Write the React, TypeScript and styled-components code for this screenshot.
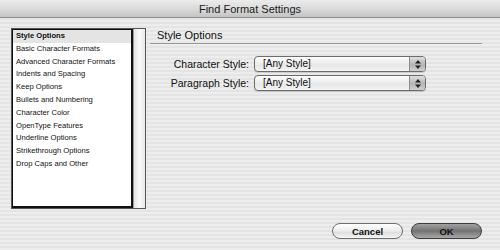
import styled, { createGlobalStyle } from 'styled-components';

const GlobalStyle = createGlobalStyle`
  html, body {
    margin: 0;
    padding: 0;
    width: 500px;
    height: 250px;
    overflow: hidden;
    background: #ececec;
  }
`;

const Dialog = styled.div`
  width: 500px;
  height: 250px;
  display: flex;
  flex-direction: column;
  font-family: 'Liberation Sans', Arial, sans-serif;
  color: #111;
  background: repeating-linear-gradient(
    to bottom,
    #ededed 0px,
    #ededed 2px,
    #e4e4e4 2px,
    #e4e4e4 4px
  );
`;

const TitleBar = styled.div`
  height: 17px;
  flex-shrink: 0;
  display: flex;
  align-items: center;
  justify-content: center;
  font-size: 11px;
  color: #1a1a1a;
  background: linear-gradient(to bottom, #ececec 0%, #d9d9d9 55%, #c4c4c4 100%);
  border-bottom: 1px solid #8f8f8f;
`;

const Body = styled.div`
  flex: 1;
  display: flex;
  padding: 10px 18px 0 11px;
  gap: 4px;
`;

const ListFrame = styled.div`
  width: 135px;
  height: 181px;
  display: flex;
  border: 1px solid #555;
  box-sizing: border-box;
  background: #fff;
`;

const List = styled.ul`
  flex: 1;
  margin: 0;
  padding: 0;
  list-style: none;
  border: 2px solid #111;
  border-top-width: 1px;
  border-left-width: 1px;
`;

const ListItem = styled.li<{ $selected?: boolean }>`
  height: 12.8px;
  line-height: 12.8px;
  padding-left: 3px;
  font-size: 7.6px;
  font-weight: ${({ $selected }) => ($selected ? 'bold' : 'normal')};
  background: ${({ $selected }) => ($selected ? '#e4e4e4' : 'transparent')};
  white-space: nowrap;
`;

const ScrollTrack = styled.div`
  width: 11px;
  background: linear-gradient(to right, #e4e4e4, #fafafa 50%, #e9e9e9);
  border-left: 1px solid #999;
`;

const Panel = styled.div`
  flex: 1;
  display: flex;
  flex-direction: column;
`;

const PanelHeading = styled.div`
  font-size: 11px;
  line-height: 13px;
  padding: 1px 0 1px 7px;
  border-bottom: 1px solid #9a9a9a;
`;

const Fields = styled.div`
  display: grid;
  grid-template-columns: 99px 172px;
  column-gap: 5px;
  row-gap: 3px;
  margin-top: 12px;
`;

const Label = styled.div`
  font-size: 10.5px;
  text-align: right;
  line-height: 16px;
`;

const Select = styled.div`
  height: 16px;
  display: flex;
  align-items: stretch;
  border: 1px solid #6c6c6c;
  border-radius: 4px;
  background: linear-gradient(to bottom, #fdfdfd, #e8e8e8 60%, #f4f4f4);
  box-sizing: border-box;
  box-shadow: 0 1px 1px rgba(0, 0, 0, 0.15);
  overflow: hidden;
`;

const SelectValue = styled.div`
  flex: 1;
  font-size: 10px;
  line-height: 14px;
  padding-left: 8px;
`;

const Stepper = styled.div`
  width: 15px;
  border-left: 1px solid #8a8a8a;
  background: linear-gradient(to bottom, #e0e0e0, #b4b4b4 55%, #d0d0d0);
  display: flex;
  align-items: center;
  justify-content: center;
`;

const Footer = styled.div`
  display: flex;
  justify-content: flex-end;
  gap: 8px;
  padding: 0 18px 11px 0;
`;

const Button = styled.div<{ $primary?: boolean }>`
  width: 71px;
  height: 16px;
  border-radius: 8px;
  border: 1px solid ${({ $primary }) => ($primary ? '#3c3c3c' : '#6f6f6f')};
  box-sizing: border-box;
  display: flex;
  align-items: center;
  justify-content: center;
  font-size: 9.5px;
  font-weight: bold;
  color: #111;
  background: ${({ $primary }) =>
    $primary
      ? 'linear-gradient(to bottom, #a2a2a2, #727272 50%, #7e7e7e 60%, #a8a8a8)'
      : 'linear-gradient(to bottom, #ffffff, #ececec 50%, #dedede 60%, #f6f6f6)'};
`;

const items = [
  'Style Options',
  'Basic Character Formats',
  'Advanced Character Formats',
  'Indents and Spacing',
  'Keep Options',
  'Bullets and Numbering',
  'Character Color',
  'OpenType Features',
  'Underline Options',
  'Strikethrough Options',
  'Drop Caps and Other',
];

const Arrows = () => (
  <svg width="6" height="9" viewBox="0 0 6 9">
    <path d="M3 0 L6 3.5 H0 Z" fill="#222" />
    <path d="M3 9 L6 5.5 H0 Z" fill="#222" />
  </svg>
);

const StyleSelect = ({ value }: { value: string }) => (
  <Select>
    <SelectValue>{value}</SelectValue>
    <Stepper>
      <Arrows />
    </Stepper>
  </Select>
);

export default function App() {
  return (
    <>
      <GlobalStyle />
      <Dialog>
        <TitleBar>Find Format Settings</TitleBar>
        <Body>
          <ListFrame>
            <List>
              {items.map((item, i) => (
                <ListItem key={item} $selected={i === 0}>
                  {item}
                </ListItem>
              ))}
            </List>
            <ScrollTrack />
          </ListFrame>
          <Panel>
            <PanelHeading>Style Options</PanelHeading>
            <Fields>
              <Label>Character Style:</Label>
              <StyleSelect value="[Any Style]" />
              <Label>Paragraph Style:</Label>
              <StyleSelect value="[Any Style]" />
            </Fields>
          </Panel>
        </Body>
        <Footer>
          <Button>Cancel</Button>
          <Button $primary>OK</Button>
        </Footer>
      </Dialog>
    </>
  );
}
